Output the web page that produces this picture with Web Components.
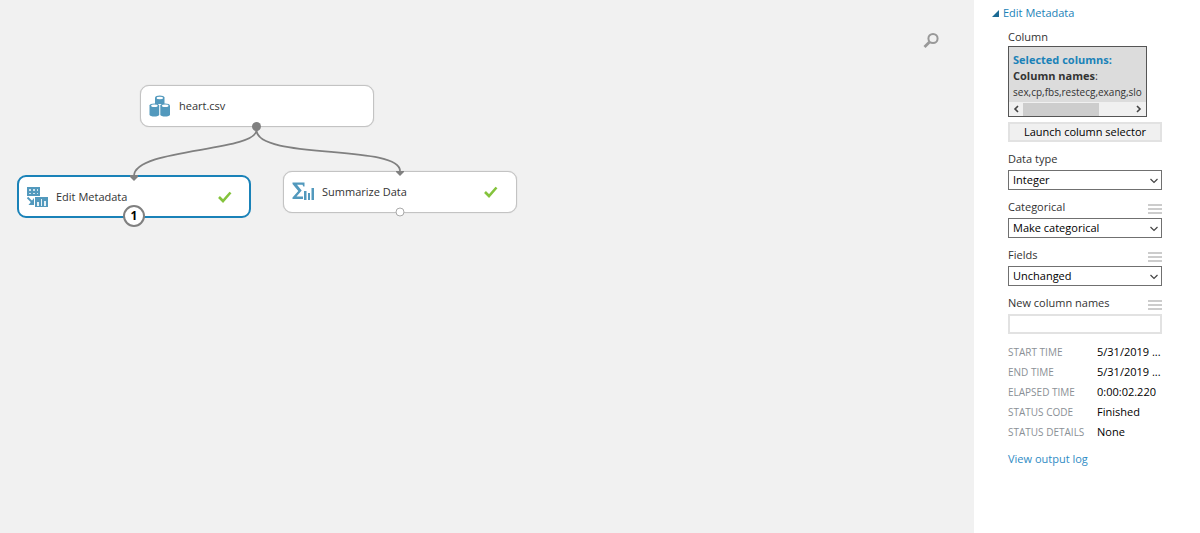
<!DOCTYPE html>
<html lang="en">
<head>
<meta charset="utf-8">
<meta name="viewport" content="width=device-width, initial-scale=1">
<title>Experiment - Edit Metadata</title>
<style>
    body {
        margin: 0;
        font-family: "Open Sans", "Noto Sans", sans-serif;
        font-size: 11px;
        line-height: 18px;
        color: #333;
        background: #fff;
        --accent: #1a82b8;
        --icon: #5299bd;
    }
</style>
</head>
<body>
<experiment-app>
    <graph-canvas>
        <graph-node icon="dataset" label="heart.csv" style="left: 140px; top: 85px"></graph-node>
        <graph-node icon="metadata" label="Edit Metadata" done selected style="left: 17px; top: 175px">
            <span slot="port">1</span>
        </graph-node>
        <graph-node icon="summarize" label="Summarize Data" done output style="left: 283px; top: 171px"></graph-node>
    </graph-canvas>
    <property-panel slot="side" heading="Edit Metadata">
        <column-picker></column-picker>
        <select-field label="Data type" value="Integer"></select-field>
        <select-field label="Categorical" value="Make categorical" menu></select-field>
        <select-field label="Fields" value="Unchanged" menu></select-field>
        <text-field label="New column names"></text-field>
        <run-status></run-status>
    </property-panel>
</experiment-app>

<script>
    const ICONS = {
        dataset: `
            <svg width="22" height="22" viewBox="0 0 22 22">
                <g fill="var(--icon)">
                    <path d="M6 2.500C6 -.2 15.500 -.2 15.500 2.500V9H6z"/>
                    <path d="M.5 10.500C.5 7.800 10.200 7.800 10.200 10.500V19.500C10.200 22.200 .5 22.200 .5 19.500z"/>
                    <path d="M11.300 10.500C11.300 7.800 21 7.800 21 10.500V19.500C21 22.200 11.300 22.200 11.300 19.500z"/>
                </g>
                <g fill="#fff">
                    <ellipse cx="10.800" cy="3" rx="3.200" ry="1.200"/>
                    <ellipse cx="5.400" cy="10.800" rx="3.300" ry="1.200"/>
                    <ellipse cx="16.200" cy="10.800" rx="3.300" ry="1.200"/>
                </g>
            </svg>`,
        metadata: `
            <svg width="22" height="22" viewBox="0 0 22 22">
                <path fill="var(--icon)" d="M1 1h13v9H1z"/>
                <path fill="#cfe3ee" d="M3 3h2v2H3zM7 3h2v2H7zM11 3h1v2h-1zM3 7h2v1H3zM7 7h2v1H7zM11 7h1v1h-1z"/>
                <path fill="none" stroke="var(--icon)" stroke-width="1.800" d="M1.500 11.500l4.500 4.500"/>
                <path fill="var(--icon)" d="M8 12v7H2.500z"/>
                <path fill="var(--icon)" d="M9 11h13v10H9z"/>
                <path fill="#e4f0f6" d="M11 16h2v4h-2zM15 13h1v7h-1zM18 15h2v5h-2z"/>
            </svg>`,
        summarize: `
            <svg width="22" height="22" viewBox="0 0 22 22">
                <path fill="var(--icon)" d="M.5 1.500h12v4h-1.200L10.500 3.700H5L9.700 9.500 4.500 15.500H11V18H.5V16.500L6.300 10 .5 3z"/>
                <path fill="var(--icon)" d="M12 10h2.500v9H12zM16 12h2v7h-2zM19.500 7H22v12h-2.500z"/>
            </svg>`
    };

    const MENU_BUTTON = `
        <button class="menu" type="button" aria-label="Parameter menu">
            <svg width="14" height="12" viewBox="0 0 14 12">
                <path fill="#ccc" d="M0 1h14v2H0zM0 5h14v2H0zM0 9h14v2H0z"/>
            </svg>
        </button>`;

    const FIELD_CSS = `
        :host { display: block; }
        .head { display: flex; justify-content: space-between; margin-bottom: 2px; height: 18px; }
        .menu { display: flex; align-items: flex-end; padding: 0 0 1px; border: 0; background: none; }
        select, input {
            display: block;
            box-sizing: border-box;
            width: 100%;
            height: 20px;
            margin: 0;
            padding: 0 4px;
            border: 1px solid #707070;
            border-radius: 0;
            background: #fff;
            color: #000;
            font: inherit;
        }
    `;

    class ExperimentApp extends HTMLElement {
        connectedCallback() {
            this.attachShadow({ mode: 'open' });
            this.shadowRoot.innerHTML = `
                <style>
                    :host { display: flex; min-height: 100vh; }
                    main { flex: 1; display: flex; min-width: 0; background: #f1f1f1; }
                    aside { flex: 0 0 226px; min-width: 0; }
                </style>
                <main><slot></slot></main>
                <aside><slot name="side"></slot></aside>
            `;
        }
    }

    class GraphCanvas extends HTMLElement {
        connectedCallback() {
            this.attachShadow({ mode: 'open' });
            this.shadowRoot.innerHTML = `
                <style>
                    :host { display: block; position: relative; flex: 1; overflow: hidden; }
                    .wires { position: absolute; left: 0; top: 0; pointer-events: none; }
                    .search { position: absolute; right: 34px; top: 32px; padding: 0; border: 0; background: none; }
                    .search svg { display: block; }
                </style>
                <svg class="wires" width="560" height="240" viewBox="0 0 560 240">
                    <g fill="none" stroke="#808080" stroke-width="1.800">
                        <path d="M256.500 130C256.500 152 134 148 134 176"/>
                        <path d="M256.500 130C256.500 160 400 144 400 171"/>
                    </g>
                </svg>
                <slot></slot>
                <svg class="wires" width="560" height="240" viewBox="0 0 560 240">
                    <g fill="#808080">
                        <circle cx="256.500" cy="126.500" r="4.500"/>
                        <path d="M130 175h8v2l-4 4-4-4zM396 171h8v1l-4 4-4-4z"/>
                    </g>
                </svg>
                <button class="search" type="button" aria-label="Search">
                    <svg width="17" height="17" viewBox="0 0 17 17" fill="none" stroke="#999">
                        <circle cx="10" cy="6.500" r="4.600" stroke-width="2"/>
                        <path d="M6.500 10L1.500 15" stroke-width="2.800"/>
                    </svg>
                </button>
            `;
        }
    }

    class GraphNode extends HTMLElement {
        connectedCallback() {
            this.attachShadow({ mode: 'open' });
            const check = this.hasAttribute('done') ? `
                <svg width="14" height="12" viewBox="0 0 14 12" role="img" aria-label="Finished">
                    <path d="M1 6l4 4L12.500 1.500" fill="none" stroke="#84c33c" stroke-width="2.600"/>
                </svg>` : '';
            this.shadowRoot.innerHTML = `
                <style>
                    :host {
                        position: absolute;
                        display: flex;
                        align-items: center;
                        gap: 8px;
                        box-sizing: border-box;
                        width: 234px;
                        height: 42px;
                        padding: 0 18px 0 8px;
                        border: 1px solid #c3c3c3;
                        border-radius: 9px;
                        background: #fff;
                        box-shadow: 0 0 1px #bbb;
                    }
                    :host([selected]) {
                        height: 43px;
                        padding: 0 17px 0 7px;
                        border: 2px solid var(--accent);
                        box-shadow: none;
                    }
                    .label { flex: 1; white-space: nowrap; }
                    .port {
                        position: absolute;
                        left: 50%;
                        top: 100%;
                        transform: translate(-50%, -50%);
                        box-sizing: border-box;
                        width: 9px;
                        height: 9px;
                        border: 1px solid #aaa;
                        border-radius: 50%;
                        background: #fff;
                    }
                    ::slotted([slot="port"]) {
                        position: absolute;
                        left: 50%;
                        top: 100%;
                        transform: translate(-50%, -50%);
                        box-sizing: border-box;
                        width: 22px;
                        height: 22px;
                        border: 2px solid #808080;
                        border-radius: 50%;
                        background: #fff;
                        color: #000;
                        font-size: 12px;
                        font-weight: bold;
                        text-align: center;
                    }
                </style>
                ${ICONS[this.getAttribute('icon')]}
                <span class="label">${this.getAttribute('label')}</span>
                ${check}
                ${this.hasAttribute('output') ? '<span class="port"></span>' : ''}
                <slot name="port"></slot>
            `;
        }
    }

    class PropertyPanel extends HTMLElement {
        connectedCallback() {
            this.attachShadow({ mode: 'open' });
            this.shadowRoot.innerHTML = `
                <style>
                    :host { display: block; padding: 4px 38px 16px 18px; }
                    h2 {
                        display: flex;
                        align-items: center;
                        gap: 4px;
                        margin: 0 0 6px;
                        font-size: 11px;
                        font-weight: normal;
                        color: var(--accent);
                    }
                    .body { display: flex; flex-direction: column; gap: 8px; padding-left: 16px; }
                </style>
                <h2>
                    <svg width="7" height="7" viewBox="0 0 7 7"><path fill="#1b6a94" d="M7 0v7H0z"/></svg>
                    ${this.getAttribute('heading')}
                </h2>
                <div class="body"><slot></slot></div>
            `;
        }
    }

    class ColumnPicker extends HTMLElement {
        connectedCallback() {
            this.attachShadow({ mode: 'open' });
            this.shadowRoot.innerHTML = `
                <style>
                    :host { display: block; }
                    .list {
                        box-sizing: border-box;
                        margin-right: 15px;
                        border: 1px solid #555;
                        background: #dcdcdc;
                    }
                    .rows { padding: 5px 0 2px 4px; overflow: hidden; white-space: nowrap; line-height: 16px; }
                    .rows div { height: 16px; }
                    .title { color: var(--accent); font-weight: bold; }
                    .names { font-size: 10px; }
                    .scroll { display: flex; align-items: center; height: 14px; background: #f0f0f0; }
                    .scroll button { display: flex; justify-content: center; width: 14px; padding: 0; border: 0; background: none; }
                    .track { flex: 1; height: 13px; }
                    .thumb { width: 70%; height: 100%; background: #cdcdcd; }
                    .launch {
                        display: block;
                        width: 100%;
                        height: 20px;
                        margin-top: 5px;
                        padding: 0;
                        border: 2px solid #e2e2e2;
                        background: #f0f0f0;
                        color: #000;
                        font: inherit;
                        line-height: 16px;
                    }
                </style>
                <div id="caption">Column</div>
                <div class="list" role="group" aria-labelledby="caption">
                    <div class="rows">
                        <div class="title">Selected columns:</div>
                        <div><b>Column names</b>:</div>
                        <div class="names">sex,cp,fbs,restecg,exang,slo</div>
                    </div>
                    <div class="scroll">
                        <button type="button" aria-label="Scroll left">
                            <svg width="6" height="8" viewBox="0 0 6 8"><path d="M5 1L2 4l3 3" fill="none" stroke="#444" stroke-width="1.600"/></svg>
                        </button>
                        <div class="track"><div class="thumb"></div></div>
                        <button type="button" aria-label="Scroll right">
                            <svg width="6" height="8" viewBox="0 0 6 8"><path d="M1 1l3 3-3 3" fill="none" stroke="#444" stroke-width="1.600"/></svg>
                        </button>
                    </div>
                </div>
                <button class="launch" type="button">Launch column selector</button>
            `;
        }
    }

    class SelectField extends HTMLElement {
        connectedCallback() {
            this.attachShadow({ mode: 'open' });
            this.shadowRoot.innerHTML = `
                <style>
                    ${FIELD_CSS}
                    .box { position: relative; }
                    select { appearance: none; }
                    .arrow { position: absolute; right: 4px; top: 8px; pointer-events: none; }
                </style>
                <div class="head">
                    <label for="control">${this.getAttribute('label')}</label>
                    ${this.hasAttribute('menu') ? MENU_BUTTON : ''}
                </div>
                <div class="box">
                    <select id="control"><option>${this.getAttribute('value')}</option></select>
                    <svg class="arrow" width="8" height="6" viewBox="0 0 8 6"><path d="M.5 1L4 4.500 7.500 1" fill="none" stroke="#444" stroke-width="1.200"/></svg>
                </div>
            `;
        }
    }

    class TextField extends HTMLElement {
        connectedCallback() {
            this.attachShadow({ mode: 'open' });
            this.shadowRoot.innerHTML = `
                <style>
                    ${FIELD_CSS}
                    input { border: 2px solid #e2e2e2; }
                </style>
                <div class="head">
                    <label for="control">${this.getAttribute('label')}</label>
                    ${MENU_BUTTON}
                </div>
                <input id="control" type="text">
            `;
        }
    }

    class RunStatus extends HTMLElement {
        connectedCallback() {
            this.attachShadow({ mode: 'open' });
            const rows = [
                ['START TIME', '5/31/2019 ...'],
                ['END TIME', '5/31/2019 ...'],
                ['ELAPSED TIME', '0:00:02.220'],
                ['STATUS CODE', 'Finished'],
                ['STATUS DETAILS', 'None']
            ];
            this.shadowRoot.innerHTML = `
                <style>
                    :host { display: block; }
                    table { width: 100%; border-collapse: collapse; table-layout: fixed; line-height: 20px; }
                    th { width: 89px; padding: 0; font-size: 10px; font-weight: normal; text-align: left; color: #8a9096; white-space: nowrap; }
                    td { padding: 0; color: #000; white-space: nowrap; }
                    a { display: inline-block; margin-top: 8px; color: #2f8bc4; text-decoration: none; }
                </style>
                <table>
                    ${rows.map(([name, value]) => `<tr><th scope="row">${name}</th><td>${value}</td></tr>`).join('')}
                </table>
                <a href="#log">View output log</a>
            `;
        }
    }

    customElements.define('experiment-app', ExperimentApp);
    customElements.define('graph-canvas', GraphCanvas);
    customElements.define('graph-node', GraphNode);
    customElements.define('property-panel', PropertyPanel);
    customElements.define('column-picker', ColumnPicker);
    customElements.define('select-field', SelectField);
    customElements.define('text-field', TextField);
    customElements.define('run-status', RunStatus);
</script>
</body>
</html>
